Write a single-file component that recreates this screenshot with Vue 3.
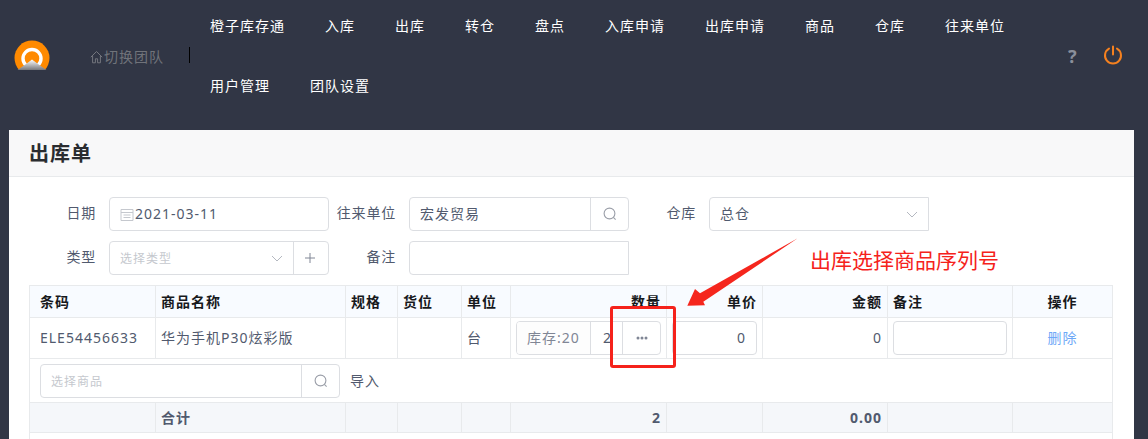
<script setup>
const navItems = ['橙子库存通', '入库', '出库', '转仓', '盘点', '入库申请', '出库申请', '商品', '仓库', '往来单位', '用户管理', '团队设置']
const cols = [126, 190, 52, 64, 49, 156, 96, 125, 125, 100]
</script>

<template>
  <div class="page">
    <header class="top">
      <svg class="logo" width="36" height="36" viewBox="0 0 36 36">
        <defs>
          <linearGradient id="mtn" x1="0" y1="0" x2="0" y2="1">
            <stop offset="0" stop-color="#ffffff" />
            <stop offset="1" stop-color="#77787c" />
          </linearGradient>
          <clipPath id="cut"><rect x="0" y="0" width="36" height="30" /></clipPath>
        </defs>
        <g clip-path="url(#cut)">
          <circle cx="18" cy="18" r="17.5" fill="#ff8a00" />
          <circle cx="18" cy="18.5" r="9" fill="none" stroke="#fff" stroke-width="3.4" />
          <polygon points="18,19.5 24,24 32.5,30 3.5,30 12,24" fill="url(#mtn)" />
        </g>
      </svg>
      <a class="team">
        <svg width="13" height="14" viewBox="0 0 13 14" fill="none" stroke="#74777e" stroke-width="1">
          <path d="M0.8 7.2 6.5 1.5l5.7 5.7M2.6 5.8v7h2.8V8.8h2.2v4h2.8v-7" />
        </svg>
        <span>切换团队</span>
      </a>
      <i class="sep"></i>
      <nav class="nav">
        <a v-for="n in navItems" :key="n">{{ n }}</a>
      </nav>
      <div class="tools">
        <span class="help">?</span>
        <svg width="20" height="20" viewBox="0 0 20 20" fill="none" stroke="#f5811f" stroke-width="2" stroke-linecap="round">
          <path d="M6 3.6a8 8 0 1 0 8 0M10 1.5v8" />
        </svg>
      </div>
    </header>

    <section class="card">
      <h1 class="card-title">出库单</h1>
      <div class="form">
        <div class="item">
          <label>日期</label>
          <div class="control pad">
            <svg class="cal" width="14" height="13" viewBox="0 0 14 13" fill="none" stroke="#c5c8ce">
              <path d="M1 1.5h12v11H1zM1 4.5h12M3.5 7h7M3.5 9.5h7" />
            </svg>
            <span class="val">2021-03-11</span>
          </div>
        </div>
        <div class="item">
          <label>往来单位</label>
          <div class="control group">
            <span class="grow pad-text">宏发贸易</span>
            <span class="addon s39">
              <svg width="14" height="14" viewBox="0 0 14 14" fill="none" stroke="#9a9ea8" stroke-width="1.1">
                <circle cx="6.5" cy="6.5" r="5.4" /><path d="m10.4 10.4 2.2 2.2" />
              </svg>
            </span>
          </div>
        </div>
        <div class="item">
          <label>仓库</label>
          <div class="control group square-r">
            <span class="grow pad-text">总仓</span>
            <svg class="chev" width="12" height="7" viewBox="0 0 12 7" fill="none" stroke="#b4b8c0" stroke-width="1">
              <path d="m1 1 5 5 5-5" />
            </svg>
          </div>
        </div>
        <div class="item">
          <label>类型</label>
          <div class="control group">
            <span class="grow pad-text ph">选择类型</span>
            <svg class="chev" width="12" height="7" viewBox="0 0 12 7" fill="none" stroke="#b4b8c0" stroke-width="1">
              <path d="m1 1 5 5 5-5" />
            </svg>
            <span class="addon s36">
              <svg class="plus" width="10" height="10" viewBox="0 0 10 10" stroke="#808695" stroke-width="1"><path d="M5 0v10M0 5h10" /></svg>
            </span>
          </div>
        </div>
        <div class="item">
          <label>备注</label>
          <div class="control square-r"></div>
        </div>
      </div>

      <table class="grid">
        <colgroup><col v-for="(w, i) in cols" :key="i" :style="{ width: w + 'px' }" /></colgroup>
        <thead>
          <tr>
            <th class="first">条码</th><th>商品名称</th><th>规格</th><th>货位</th><th>单位</th>
            <th class="r">数量</th><th class="r">单价</th><th class="r">金额</th><th>备注</th><th class="c">操作</th>
          </tr>
        </thead>
        <tbody>
          <tr class="body-row">
            <td class="first">ELE54456633</td>
            <td>华为手机P30炫彩版</td>
            <td></td><td></td>
            <td>台</td>
            <td>
              <div class="qty">
                <span class="stock">库存:20</span>
                <span class="qval">2</span>
                <span class="more">
                  <svg width="12" height="4" viewBox="0 0 12 4" fill="#808695"><circle cx="2" cy="2" r="1.5" /><circle cx="6" cy="2" r="1.5" /><circle cx="10" cy="2" r="1.5" /></svg>
                </span>
              </div>
            </td>
            <td class="r"><div class="box price">0</div></td>
            <td class="r">0</td>
            <td><div class="box note"></div></td>
            <td class="c"><a class="link">删除</a></td>
          </tr>
          <tr class="add-row">
            <td colspan="10">
              <div class="add">
                <div class="control group pick">
                  <span class="grow pad-text ph">选择商品</span>
                  <span class="addon s39">
                    <svg width="14" height="14" viewBox="0 0 14 14" fill="none" stroke="#9a9ea8" stroke-width="1.1">
                      <circle cx="6.5" cy="6.5" r="5.4" /><path d="m10.4 10.4 2.2 2.2" />
                    </svg>
                  </span>
                </div>
                <span class="import">导入</span>
              </div>
            </td>
          </tr>
          <tr class="total">
            <td class="first"></td><td>合计</td><td></td><td></td><td></td>
            <td class="r">2</td><td></td><td class="r">0.00</td><td></td><td></td>
          </tr>
          <tr class="tail"><td colspan="10"></td></tr>
        </tbody>
      </table>
    </section>

    <svg class="arrow" width="120" height="80" viewBox="0 0 120 80">
      <polygon points="7.3,67.7 15,51 20,55.3 117.7,0.3 23.3,63.7 25,67.3" fill="#f5261d" />
    </svg>
    <div class="mark"></div>
    <div class="note-text">出库选择商品序列号</div>
  </div>
</template>

<style scoped>
.page {
  position: relative;
  width: 1148px;
  height: 439px;
  overflow: hidden;
  background: #313645;
  font: 14px/20px "Noto Sans", "Noto Sans CJK SC", sans-serif;
  letter-spacing: 1px;
  color: #515a6e;
}
.top {
  display: flex;
  align-items: flex-start;
  height: 130px;
  padding-left: 14px;
  box-sizing: border-box;
}
.logo { margin-top: 40px; flex: none; width: 36px; height: 36px; }
.team {
  display: flex;
  align-items: center;
  margin: 47px 0 0 40px;
  color: #70737a;
  height: 20px;
}
.team svg { margin-right: 1px; }
.sep { width: 1px; height: 16px; background: #000; margin: 47px 0 0 25px; }
.nav {
  display: flex;
  flex-wrap: wrap;
  width: 850px;
  margin: -4px 0 0 20px;
  flex: none;
}
.nav a {
  line-height: 60px;
  margin-right: 40px;
  color: #fff;
  white-space: nowrap;
}
.tools {
  display: flex;
  align-items: flex-start;
  margin: 45px 0 0 8px;
}
.help { width: 13px; margin-top: 1px; color: #8a8f9b; font-weight: 700; font-size: 18px; line-height: 20px; letter-spacing: 0; }
.tools svg { margin-left: 22px; }
.card {
  margin: 0 14px 0 9px;
  height: 320px;
  background: #fff;
  border-radius: 4px 4px 0 0;
}
.card-title {
  margin: 0;
  height: 47px;
  padding-left: 20px;
  box-sizing: border-box;
  font-size: 20px;
  font-weight: 700;
  line-height: 47px;
  color: #2a2c30;
  background: #f8f8f9;
  border-bottom: 1px solid #e8eaec;
}
.form {
  display: grid;
  grid-template-columns: repeat(3, 300px);
  row-gap: 10px;
  padding: 20px 0 10px 20px;
}
.item { display: flex; align-items: center; }
.item label { width: 67px; text-align: right; margin-right: 13px; padding-bottom: 2px; letter-spacing: 0.8px; white-space: nowrap; flex: none; direction: rtl; }
.control {
  box-sizing: border-box;
  width: 220px;
  height: 34px;
  border: 1px solid #dcdee2;
  border-radius: 4px;
  display: flex;
  align-items: center;
  background: #fff;
}
.square-r { border-radius: 4px 0 0 4px; }
.pad { padding-left: 10px; }
.cal { flex: none; margin-right: 1px; }
.val { padding-bottom: 1px; }
.grow { flex: 1; min-width: 0; }
.pad-text { padding-left: 10px; }
.ph { color: #c5c8ce; font-size: 12px; padding-top: 2px; }
.chev { margin-right: 10px; flex: none; }
.addon {
  display: flex;
  align-items: center;
  justify-content: center;
  height: 100%;
  border-left: 1px solid #dcdee2;
  box-sizing: border-box;
  flex: none;
}
.s39 { width: 38px; }
.s36 { width: 35px; }
.plus { margin-right: 2px; }
.grid {
  border-collapse: collapse;
  table-layout: fixed;
  width: 1084px;
  margin-left: 20px;
}
.grid th, .grid td {
  border: 1px solid #e8eaec;
  padding: 0 5px;
  text-align: left;
  white-space: nowrap;
}
.grid th { height: 31px; background: #f8fbff; color: #17191c; font-weight: 700; }
.grid .first { padding-left: 10px; }
.grid .r { text-align: right; }
.grid .c { text-align: center; }
.body-row td { height: 40px; }
.qty {
  display: flex;
  align-items: center;
  box-sizing: border-box;
  width: 145px;
  height: 34px;
  border: 1px solid #dcdee2;
  border-radius: 4px;
  overflow: hidden;
}
.stock { width: 74px; box-sizing: border-box; padding-left: 10px; color: #808695; border-right: 1px solid #dcdee2; height: 100%; line-height: 32px; background: #fdfdfd; }
.qval { width: 32px; box-sizing: border-box; padding-left: 12px; height: 100%; line-height: 32px; border-right: 1px solid #dcdee2; overflow: hidden; }
.more { flex: 1; display: flex; align-items: center; justify-content: center; }
.box {
  box-sizing: border-box;
  height: 34px;
  border: 1px solid #dcdee2;
  border-radius: 4px;
  background: #fff;
}
.price { width: 85px; margin-left: auto; margin-right: 1px; line-height: 32px; padding-right: 10px; }
.note { width: 114px; }
.link { color: #6ea8f7; }
.add-row td { height: 43px; border-left: 1px solid #e8eaec; padding: 0 0 0 10px; }
.add { display: flex; align-items: center; }
.pick { width: 300px; }
.import { margin-left: 10px; }
.total td { height: 29px; background: #f5f7fa; font-weight: 700; }
.tail td { height: 20px; }
.arrow { position: absolute; left: 680px; top: 238px; }
.mark {
  position: absolute;
  left: 610px;
  top: 306px;
  width: 66px;
  height: 62px;
  box-sizing: border-box;
  border: 3px solid #f5221b;
  border-radius: 3px;
}
.note-text {
  position: absolute;
  left: 810px;
  top: 246px;
  font-size: 21px;
  line-height: 28px;
  letter-spacing: 0;
  color: #f5221b;
  white-space: nowrap;
}
</style>

<style>
html, body { margin: 0; background: #313645; overflow: hidden; }
</style>
